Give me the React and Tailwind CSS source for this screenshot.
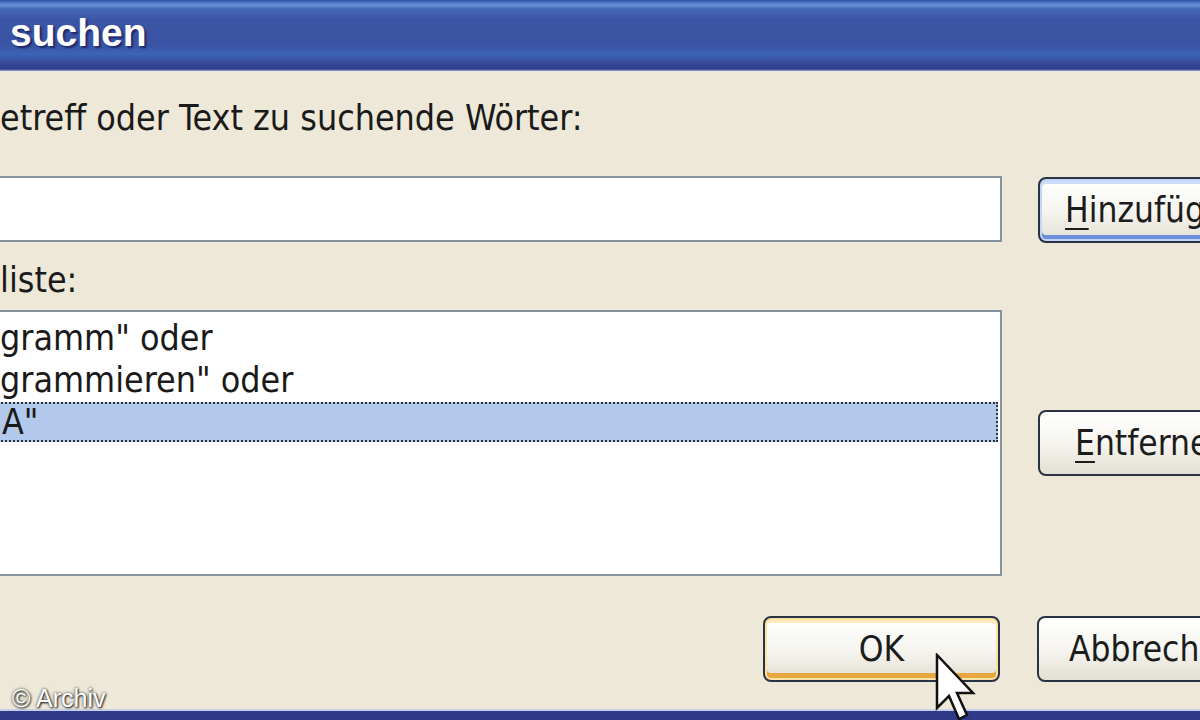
import React from 'react';

const btnBase =
  'h-[66px] w-[237px] shrink-0 rounded-[8px] border-2 border-[#2a3344] bg-gradient-to-b from-white via-[#f6f5f0] to-[#e3e0d4] flex items-center text-[35px] text-[#1c1c1c] whitespace-nowrap';

function Cursor() {
  return (
    <svg
      className="absolute left-[935px] top-[653px]"
      width="44"
      height="70"
      viewBox="0 0 44 70"
    >
      <path
        d="M2 2 L2 55 L14 43 L24 66 L32 62 L22 40 L38 40 Z"
        fill="#ffffff"
        stroke="#111111"
        strokeWidth="2.5"
        strokeLinejoin="miter"
      />
    </svg>
  );
}

export default function App() {
  return (
    <div className="relative w-[1200px] h-[720px] overflow-hidden bg-[#eee8d8] font-['DejaVu_Sans_Condensed','DejaVu_Sans',sans-serif] [font-stretch:condensed]">
      {/* Title bar */}
      <div className="h-[71px] bg-[linear-gradient(to_bottom,#2c55aa_0px,#6a92d8_5px,#4568b8_9px,#3c54a4_20px,#3a53a3_45px,#3c64b6_54px,#3a4c9c_62px,#2e3c8a_69px,#9aa6d0_71px)] flex items-center">
        <span className="pl-[10px] pb-[4px] text-[39px] font-bold text-white font-['Liberation_Sans',sans-serif] [font-stretch:normal] [text-shadow:2px_2px_2px_#1b2767]">
          suchen
        </span>
      </div>

      {/* Content */}
      <div className="flex">
        <div className="ml-[-20px] w-[1022px] shrink-0 flex flex-col">
          <div className="mt-[26px] pl-[20px] text-[35.5px] leading-[42px] text-[#1a1a1a] whitespace-nowrap">
            etreff oder Text zu suchende Wörter:
          </div>
          <div className="mt-[37px] h-[66px] border-2 border-[#87929c] bg-white" />
          <div className="mt-[17px] pl-[20px] text-[35.5px] leading-[42px] text-[#1a1a1a]">
            liste:
          </div>
          <div className="mt-[9px] h-[266px] border-2 border-[#87929c] bg-white pt-[5px] pr-[2px] text-[35.5px] leading-[42px] text-[#1a1a1a] whitespace-nowrap">
            <div className="h-[42px] pl-[18px]">gramm" oder</div>
            <div className="h-[42px] pl-[18px]">grammieren" oder</div>
            <div className="h-[40px] mt-[1px] pl-[18px] bg-[#b2c9ec] border-2 border-dotted border-[#2c3440] leading-[36px]">
              A"
            </div>
          </div>
        </div>

        <div className="ml-[36px] shrink-0 flex flex-col">
          <div className={`${btnBase} mt-[106px] pl-[25px] shadow-[inset_0_0_0_2px_#c4d6f6,inset_0_-4px_0_2px_#6d8fdb,inset_0_3px_0_2px_#cddcf8]`}>
            <span>
              <span className="underline underline-offset-[6px] decoration-2">H</span>inzufügen
            </span>
          </div>
          <div className={`${btnBase} mt-[167px] pl-[35px]`}>
            <span>
              <span className="underline underline-offset-[6px] decoration-2">E</span>ntfernen
            </span>
          </div>
        </div>
      </div>

      {/* Bottom buttons */}
      <div className="mt-[40px] flex">
        <div className={`${btnBase} ml-[763px] justify-center shadow-[inset_0_0_0_2px_#fbe3a6,inset_0_-5px_0_2px_#e6a640,inset_0_3px_0_2px_#fdebbd]`}>
          OK
        </div>
        <div className={`${btnBase} ml-[37px] pl-[30px]`}>Abbrechen</div>
      </div>

      {/* Bottom window edge */}
      <div className="mt-[27px] h-[2px] bg-[#c8cfe8]" />
      <div className="h-[10px] bg-[#2f3b88]" />

      {/* Watermark */}
      <div className="absolute left-[12px] top-[680px] text-[25px] text-white font-['Liberation_Sans',sans-serif] [font-stretch:normal] [text-shadow:0_0_3px_#333,1px_1px_2px_#222]">
        © Archiv
      </div>

      <Cursor />
    </div>
  );
}
